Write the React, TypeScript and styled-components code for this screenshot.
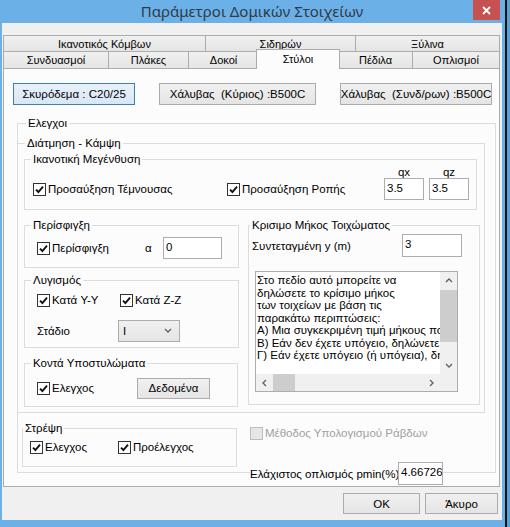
import styled, { createGlobalStyle } from 'styled-components';

const GlobalStyle = createGlobalStyle`
  html, body {
    margin: 0;
    padding: 0;
  }
  body {
    width: 510px;
    height: 527px;
    overflow: hidden;
    background: linear-gradient(to right, #141414 507px, #5f9fd4 507px);
    font-family: "Liberation Sans", Arial, sans-serif;
    font-size: 11.5px;
    color: #000;
  }
`;

const Window = styled.div`
  box-sizing: border-box;
  width: 505px;
  height: 527px;
  padding: 0 3px 7px 2px;
  background: #6cb0e8;
  display: flex;
  flex-direction: column;
`;

const TitleBar = styled.div`
  height: 23px;
  display: grid;
  grid-template-columns: 29px 1fr 29px;
  align-items: start;
`;

const Title = styled.div`
  grid-column: 2;
  text-align: center;
  font-family: "Noto Sans", "Open Sans", sans-serif;
  font-size: 15px;
  line-height: 22px;
  color: #2f3b47;
`;

const CloseButton = styled.div`
  width: 27px;
  height: 20px;
  background: #c75050;
  display: flex;
  align-items: center;
  justify-content: center;
`;

const Body = styled.div`
  flex: 1;
  background: #f0f0f0;
  padding: 12px 2px 0 1px;
  display: flex;
  flex-direction: column;
`;

const TabRow = styled.div<{ $h: number }>`
  display: flex;
  height: ${p => p.$h}px;
`;

const Tab = styled.div<{ $w: number; $active?: boolean }>`
  box-sizing: border-box;
  flex: none;
  width: ${p => p.$w}px;
  border-top: 1px solid #acacac;
  border-left: 1px solid #acacac;
  background: linear-gradient(#f0f0f0, #e5e5e5);
  display: flex;
  align-items: center;
  justify-content: center;
  white-space: nowrap;
  font-size: 11px;

  &:last-child {
    border-right: 1px solid #acacac;
  }

  ${p =>
    p.$active &&
    `
    position: relative;
    z-index: 1;
    align-self: flex-start;
    height: 20px;
    margin: -2px -2px -1px;
    border-right: 1px solid #acacac;
    background: #fcfcfc;
    padding-bottom: 2px;
  `}
`;

const Panel = styled.div`
  border: 1px solid #acacac;
  background: #fcfcfc;
  padding: 14px 0 13px 0;
`;

const MaterialRow = styled.div`
  display: flex;
  justify-content: space-between;
  padding: 0 7px 0 9px;
`;

const Button = styled.div<{ $w: number; $h?: number; $focus?: boolean }>`
  box-sizing: border-box;
  width: ${p => p.$w}px;
  height: ${p => p.$h ?? 22}px;
  border: 1px solid ${p => (p.$focus ? '#3c7fb1' : '#acacac')};
  background: ${p =>
    p.$focus ? 'linear-gradient(#e8f1fa, #d8e6f4)' : 'linear-gradient(#f0f0f0, #e5e5e5)'};
  display: flex;
  align-items: center;
  justify-content: center;
  white-space: pre;
`;

const Group = styled.fieldset<{ $m?: string; $w?: number }>`
  box-sizing: border-box;
  border: 1px solid #dcdcdc;
  margin: ${p => p.$m ?? '0'};
  padding: 0;
  min-width: 0;
  ${p => (p.$w ? `width: ${p.$w}px;` : '')}
`;

const Legend = styled.legend<{ $indent: number }>`
  margin-left: ${p => p.$indent}px;
  padding: 0 2px;
  font-size: 11.5px;
  line-height: 14px;
`;

const FieldRow = styled.div<{ $cols: string; $h: number; $mt: number; $pl: number; $pb?: number }>`
  display: grid;
  grid-template-columns: ${p => p.$cols};
  height: ${p => p.$h}px;
  margin-top: ${p => p.$mt}px;
  padding-left: ${p => p.$pl}px;
  padding-bottom: ${p => p.$pb ?? 0}px;
  align-items: center;
  white-space: nowrap;
`;

const BoostGrid = styled.div`
  display: grid;
  grid-template-columns: 194px 157px 45px 40px;
  grid-template-rows: 12px 22px;
  padding: 0 0 9px 8px;
  align-items: center;
  white-space: nowrap;
`;

const CenterLabel = styled.div`
  text-align: center;
  width: 40px;
  line-height: 12px;
`;

const TextInput = styled.div<{ $w: number; $h: number }>`
  box-sizing: border-box;
  width: ${p => p.$w}px;
  height: ${p => p.$h}px;
  border: 1px solid #abadb3;
  background: #fff;
  padding: 3px 0 0 2px;
  overflow: hidden;
  white-space: nowrap;
`;

const CheckLabel = styled.span<{ $disabled?: boolean }>`
  display: inline-flex;
  align-items: center;
  gap: 2px;
  color: ${p => (p.$disabled ? '#a0a0a0' : '#000')};
  white-space: nowrap;
`;

const Box = styled.span<{ $disabled?: boolean }>`
  box-sizing: border-box;
  width: 13px;
  height: 13px;
  border: 1px solid ${p => (p.$disabled ? '#bcbcbc' : '#333')};
  background: ${p => (p.$disabled ? '#e6e6e6' : '#fff')};
  display: flex;
  align-items: center;
  justify-content: center;
`;

const Columns = styled.div`
  display: flex;
  align-items: flex-start;
  gap: 9px;
  margin: 8px 0 0 6px;
`;

const Stack = styled.div`
  display: flex;
  flex-direction: column;
`;

const Select = styled.div`
  box-sizing: border-box;
  width: 62px;
  height: 22px;
  border: 1px solid #acacac;
  background: linear-gradient(#f0f0f0, #e5e5e5);
  display: flex;
  align-items: center;
  justify-content: space-between;
  padding: 0 7px 0 4px;
`;

const MemoBox = styled.div`
  box-sizing: border-box;
  width: 203px;
  height: 121px;
  margin: 14px 0 12px 6px;
  border: 1px solid #abadb3;
  background: #fff;
  display: grid;
  grid-template-columns: 1fr 17px;
  grid-template-rows: 1fr 17px;
`;

const MemoText = styled.div`
  overflow: hidden;
  white-space: pre;
  padding: 2px 0 0 1px;
  line-height: 12.5px;
`;

const ScrollBar = styled.div<{ $vertical?: boolean }>`
  display: flex;
  flex-direction: ${p => (p.$vertical ? 'column' : 'row')};
  background: #f0f0f0;
`;

const Arrow = styled.div`
  flex: none;
  width: 17px;
  height: 17px;
  display: flex;
  align-items: center;
  justify-content: center;
`;

const Track = styled.div<{ $vertical?: boolean }>`
  flex: 1;
  display: flex;
  flex-direction: ${p => (p.$vertical ? 'column' : 'row')};
`;

const Thumb = styled.div<{ $vertical?: boolean; $offset: number; $size: number }>`
  background: #cdcdcd;
  ${p =>
    p.$vertical
      ? `margin-top: ${p.$offset}px; height: ${p.$size}px;`
      : `margin-left: ${p.$offset}px; width: ${p.$size}px;`}
`;

const Corner = styled.div`
  background: #f0f0f0;
`;

const BottomRow = styled.div`
  display: flex;
  align-items: flex-start;
  margin: 8px 0 0 4px;
`;

const SideColumn = styled.div`
  display: flex;
  flex-direction: column;
  margin: 0 0 -18px 13px;
`;

const OpaqueLabel = styled.div`
  background: #fcfcfc;
  line-height: 14px;
`;

const Spacer = styled.div<{ $h: number }>`
  height: ${p => p.$h}px;
`;

const Footer = styled.div`
  display: flex;
  justify-content: flex-end;
  gap: 5px;
  margin: 6px 2px 0 0;
`;

const tabsBack = [
  { label: 'Ικανοτικός Κόμβων', w: 202 },
  { label: 'Σιδηρών', w: 150 },
  { label: 'Ξύλινα', w: 145 },
];

const tabsFront = [
  { label: 'Συνδυασμοί', w: 105 },
  { label: 'Πλάκες', w: 80 },
  { label: 'Δοκοί', w: 70 },
  { label: 'Στύλοι', w: 84, active: true },
  { label: 'Πέδιλα', w: 74 },
  { label: 'Οπλισμοί', w: 88 },
];

const memoLines = [
  'Στο πεδίο αυτό μπορείτε να',
  'δηλώσετε το κρίσιμο μήκος',
  'των τοιχείων με βάση τις',
  'παρακάτω περιπτώσεις:',
  'Α) Μια συγκεκριμένη τιμή μήκους που θα ισχύει για όλα',
  'Β) Εάν δεν έχετε υπόγειο, δηλώνετε 0',
  'Γ) Εάν έχετε υπόγειο (ή υπόγεια), δηλώνετε το ύψος',
];

const Check = ({ label, disabled }: { label: string; disabled?: boolean }) => (
  <CheckLabel $disabled={disabled}>
    <Box $disabled={disabled}>
      {!disabled && (
        <svg width="9" height="9" viewBox="0 0 9 9">
          <path d="M1 4.6 L3.4 7 L8 1.6" fill="none" stroke="#111" strokeWidth="1.9" />
        </svg>
      )}
    </Box>
    {label}
  </CheckLabel>
);

const Chevron = ({ dir }: { dir: 'up' | 'down' | 'left' | 'right' }) => {
  const pts = {
    up: '1,5 4,2 7,5',
    down: '1,2 4,5 7,2',
    left: '5,1 2,4 5,7',
    right: '2,1 5,4 2,7',
  }[dir];
  return (
    <svg width="8" height="8" viewBox="0 0 8 8">
      <polyline points={pts} fill="none" stroke="#606060" strokeWidth="1.3" />
    </svg>
  );
};

const App = () => {
  return (
    <>
      <GlobalStyle />
      <Window>
        <TitleBar>
          <Title>Παράμετροι Δομικών Στοιχείων</Title>
          <CloseButton>
            <svg width="9" height="9" viewBox="0 0 9 9">
              <path d="M1 1 L8 8 M8 1 L1 8" stroke="#fff" strokeWidth="1.8" />
            </svg>
          </CloseButton>
        </TitleBar>
        <Body>
          <TabRow $h={16}>
            {tabsBack.map(t => (
              <Tab key={t.label} $w={t.w}>
                {t.label}
              </Tab>
            ))}
          </TabRow>
          <TabRow $h={17}>
            {tabsFront.map(t => (
              <Tab key={t.label} $w={t.w} $active={t.active}>
                {t.label}
              </Tab>
            ))}
          </TabRow>
          <Panel>
            <MaterialRow>
              <Button $w={122} $focus>
                Σκυρόδεμα : C20/25
              </Button>
              <Button $w={157}>Χάλυβας  (Κύριος) :B500C</Button>
              <Button $w={152}>Χάλυβας  (Συνδ/ρων) :B500C</Button>
            </MaterialRow>

            <Group $m="11px 3px 0 13px">
              <Legend $indent={8}>Ελεγχοι</Legend>

              <Group $m="6px 10px 0 -1px">
                <Legend $indent={7}>Διάτμηση - Κάμψη</Legend>

                <Group $m="2px 7px 0 6px">
                  <Legend $indent={6}>Ικανοτική Μεγένθυση</Legend>
                  <BoostGrid>
                    <span />
                    <span />
                    <CenterLabel>qx</CenterLabel>
                    <CenterLabel>qz</CenterLabel>
                    <Check label="Προσαύξηση Τέμνουσας" />
                    <Check label="Προσαύξηση Ροπής" />
                    <TextInput $w={40} $h={22}>3.5</TextInput>
                    <TextInput $w={40} $h={22}>3.5</TextInput>
                  </BoostGrid>
                </Group>

                <Columns>
                  <Stack>
                    <Group $w={215}>
                      <Legend $indent={6}>Περίσφιγξη</Legend>
                      <FieldRow $cols="108px 18px 59px" $h={22} $mt={5} $pl={12} $pb={8}>
                        <Check label="Περίσφιγξη" />
                        <span>α</span>
                        <TextInput $w={59} $h={22}>0</TextInput>
                      </FieldRow>
                    </Group>

                    <Group $w={215} $m="5px 0 0 0">
                      <Legend $indent={6}>Λυγισμός</Legend>
                      <FieldRow $cols="83px auto" $h={14} $mt={6} $pl={12}>
                        <Check label="Κατά Y-Y" />
                        <Check label="Κατά Z-Z" />
                      </FieldRow>
                      <FieldRow $cols="81px 62px" $h={22} $mt={13} $pl={12} $pb={5}>
                        <span>Στάδιο</span>
                        <Select>
                          <span>I</span>
                          <Chevron dir="down" />
                        </Select>
                      </FieldRow>
                    </Group>

                    <Group $w={214} $m="8px 0 0 0">
                      <Legend $indent={6}>Κοντά Υποστυλώματα</Legend>
                      <FieldRow $cols="100px 73px" $h={22} $mt={7} $pl={12} $pb={7}>
                        <Check label="Ελεγχος" />
                        <Button $w={73} $h={21}>Δεδομένα</Button>
                      </FieldRow>
                    </Group>
                  </Stack>

                  <Group $w={232}>
                    <Legend $indent={1}>Κρισιμο Μήκος Τοιχώματος</Legend>
                    <FieldRow $cols="150px 60px" $h={23} $mt={2} $pl={3}>
                      <span>Συντεταγμένη y (m)</span>
                      <TextInput $w={60} $h={23}>3</TextInput>
                    </FieldRow>
                    <MemoBox>
                      <MemoText>{memoLines.join('\n')}</MemoText>
                      <ScrollBar $vertical>
                        <Arrow>
                          <Chevron dir="up" />
                        </Arrow>
                        <Track $vertical>
                          <Thumb $vertical $offset={1} $size={52} />
                        </Track>
                        <Arrow>
                          <Chevron dir="down" />
                        </Arrow>
                      </ScrollBar>
                      <ScrollBar>
                        <Arrow>
                          <Chevron dir="left" />
                        </Arrow>
                        <Track>
                          <Thumb $offset={0} $size={22} />
                        </Track>
                        <Arrow>
                          <Chevron dir="right" />
                        </Arrow>
                      </ScrollBar>
                      <Corner />
                    </MemoBox>
                  </Group>
                </Columns>
                <Spacer $h={5} />
              </Group>

              <BottomRow>
                <Group $w={215}>
                  <Legend $indent={0}>Στρέψη</Legend>
                  <FieldRow $cols="88px auto" $h={14} $mt={5} $pl={7} $pb={12}>
                    <Check label="Ελεγχος" />
                    <Check label="Προέλεγχος" />
                  </FieldRow>
                </Group>
                <SideColumn>
                  <FieldRow $cols="auto" $h={14} $mt={5} $pl={0}>
                    <Check label="Μέθοδος Υπολογισμού Ράβδων" disabled />
                  </FieldRow>
                  <FieldRow $cols="148px 45px" $h={23} $mt={22} $pl={0}>
                    <OpaqueLabel>Ελάχιστος οπλισμός pmin(%)</OpaqueLabel>
                    <TextInput $w={45} $h={23}>4.66726</TextInput>
                  </FieldRow>
                </SideColumn>
              </BottomRow>
              <Spacer $h={5} />
            </Group>
          </Panel>
          <Footer>
            <Button $w={77} $h={21}>OK</Button>
            <Button $w={73} $h={21}>Άκυρο</Button>
          </Footer>
        </Body>
      </Window>
    </>
  );
};

export default App;
